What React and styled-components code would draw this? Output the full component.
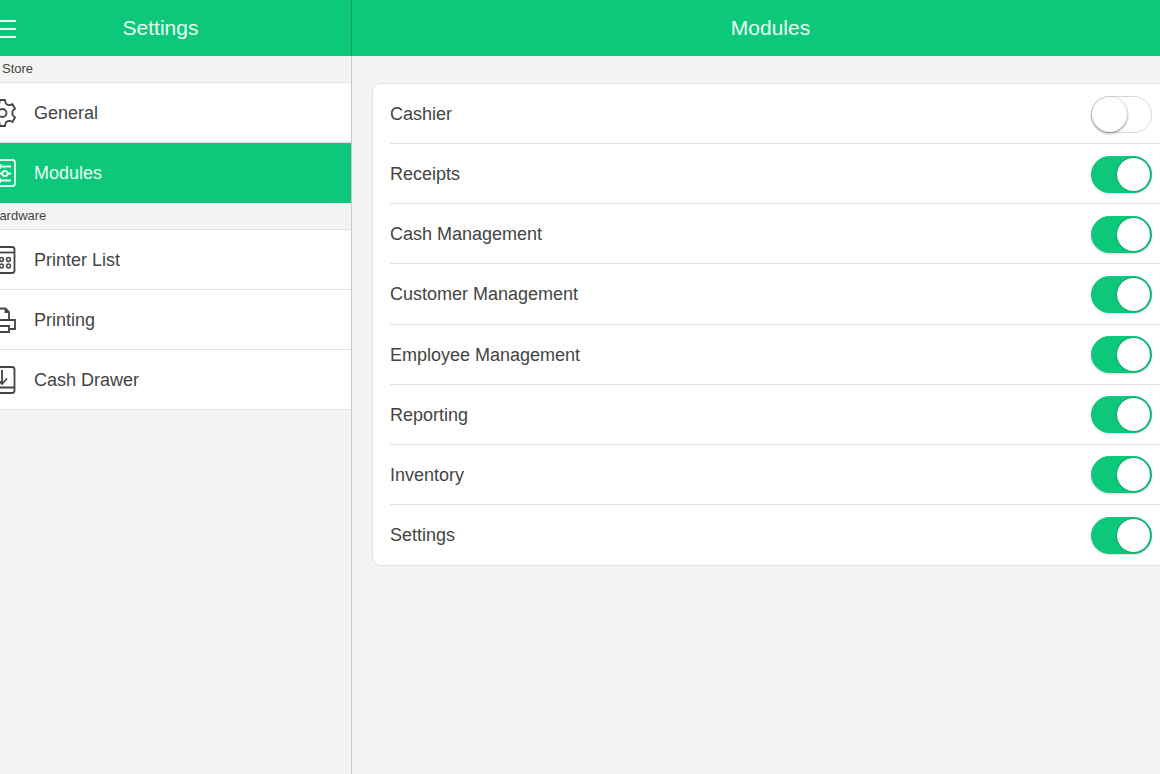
/* eslint-disable react/prop-types */
import { useState } from "react";
import styled, { createGlobalStyle } from "styled-components";

const GlobalStyle = createGlobalStyle`
  :root {
    --color-brand: #0dc77b;
    --color-brand-dark: #0a9f62;
    --color-page: #f4f4f4;
    --color-line: #e2e2e2;
    --color-text: #444;
  }

  * {
    box-sizing: border-box;
  }

  body {
    margin: 0;
    background-color: var(--color-page);
    color: var(--color-text);
    font-family: "Liberation Sans", Arial, sans-serif;
  }
`;

/* The shell bleeds past both window edges */
const Viewport = styled.div`
  overflow: hidden;
`;

const Shell = styled.div`
  display: flex;
  min-height: 100vh;
  margin: 0 -30px;
`;

const Sidebar = styled.aside`
  display: flex;
  flex-direction: column;
  flex: 0 0 382px;
`;

const Nav = styled.nav`
  flex: 1;
  border-right: 1px solid #c8c8c8;
`;

const Main = styled.main`
  flex: 1;
  min-width: 0;
`;

const Header = styled.header`
  display: grid;
  grid-template-columns: 46px 1fr 46px;
  align-items: center;
  height: 56px;
  border-right: 1px solid var(--color-brand-dark);
  background-color: var(--color-brand);
  color: #e9fff5;
`;

const Title = styled.h1`
  grid-column: 2;
  margin: 0;
  font-size: 21px;
  line-height: 24px;
  font-weight: 400;
  text-align: center;
`;

const MenuButton = styled.button`
  display: flex;
  justify-content: flex-end;
  padding: 2px 0 0;
  border: 0;
  background: none;
  color: inherit;
`;

const SectionLabel = styled.h2`
  height: 27px;
  margin: 0;
  padding-left: ${(props) => (props.$indent ? "32px" : "20px")};
  border-bottom: 1px solid var(--color-line);
  font-size: 13px;
  line-height: 26px;
  font-weight: 400;
`;

const NavItem = styled.a`
  display: flex;
  align-items: center;
  gap: 18px;
  height: 60px;
  padding: 1px 0 0 18px;
  border-bottom: 1px solid
    ${(props) => (props.$active ? "var(--color-brand)" : "var(--color-line)")};
  background-color: ${(props) => (props.$active ? "var(--color-brand)" : "#fff")};
  color: ${(props) => (props.$active ? "#e9fff5" : "inherit")};
  font-size: 18px;
  line-height: 20px;
  text-decoration: none;
`;

const StyledIcon = styled.svg`
  flex: none;
  width: 28px;
  height: 28px;
  fill: none;
  stroke: currentColor;
  stroke-width: 1.8;
`;

const Card = styled.div`
  display: grid;
  grid-auto-rows: 1fr;
  min-height: 483px;
  margin: 27px 20px;
  padding-left: 17px;
  border: 1px solid var(--color-line);
  border-radius: 9px;
  background-color: #fff;
`;

const ModuleRow = styled.label`
  display: flex;
  align-items: center;
  justify-content: space-between;
  min-height: 60px;
  padding: 1px 17px 0 0;
  border-bottom: 1px solid var(--color-line);
  font-size: 18px;
  line-height: 20px;

  &:last-child {
    border-bottom: 0;
  }
`;

const Toggle = styled.input`
  appearance: none;
  width: 61px;
  height: 37px;
  margin: 0;
  border: 1px solid #d8d8d8;
  border-radius: 19px;
  background-color: #fff;

  &::before {
    content: "";
    display: block;
    width: 35px;
    height: 35px;
    border-radius: 50%;
    background-color: #fff;
    box-shadow: 0 1px 3px rgba(0, 0, 0, 0.5);
  }

  &:checked {
    padding: 1px;
    border-color: var(--color-brand);
    background-color: var(--color-brand);
    box-shadow: 0 1px 2px rgba(0, 0, 0, 0.15);
  }

  &:checked::before {
    width: 33px;
    height: 33px;
    margin-left: auto;
    box-shadow: 0 0 2px rgba(0, 0, 0, 0.4);
  }
`;

function Icon({ children }) {
  return (
    <StyledIcon viewBox="0 0 28 28" aria-hidden="true">
      {children}
    </StyledIcon>
  );
}

const icons = {
  menu: (
    <Icon>
      <path strokeWidth="2" d="M1 6h27M1 14h27M1 22h27" />
    </Icon>
  ),
  gear: (
    <Icon>
      <path d="M12 1h5l.6 2.9q.2 1 1.2 1.4l1.2.6q1 .5 1.9.2l2.6-.9 2.6 4.5-2 1.7q-.8.7-.7 1.5v2.2q-.1.8.7 1.5l2 1.7-2.6 4.5-2.6-.9q-.9-.3-1.9.2l-1.2.6q-1 .4-1.2 1.4L17 27h-5l-.6-2.9q-.2-1-1.2-1.4l-1.2-.6q-1-.5-1.9-.2l-2.6.9-2.6-4.5 2-1.7q.8-.7.7-1.500v-2.200q.1-.8-.7-1.500l-2-1.700 2.600-4.500 2.600.9q.9.3 1.900-.2l1.200-.6q1-.4 1.200-1.400z" />
      <circle cx="14.5" cy="14" r="4" />
    </Icon>
  ),
  sliders: (
    <Icon>
      <rect x="1" y="1" width="26" height="26" rx="2.5" />
      <path d="M5 7.5h5M12 7.5h11M5 14.5h9M20 14.5h3M5 21.5h5M12 21.5h11M12 5v5M12 19v5" />
      <circle cx="17" cy="14.5" r="2.7" />
    </Icon>
  ),
  list: (
    <Icon>
      <rect x="1" y="1" width="25.5" height="26" rx="2.5" />
      <path d="M1 6.5h25.5" />
      <g strokeWidth="1.5">
        <circle cx="6" cy="13.5" r="1.9" />
        <circle cx="13.5" cy="13.5" r="1.9" />
        <circle cx="20.5" cy="13.5" r="1.9" />
        <circle cx="6" cy="20" r="1.9" />
        <circle cx="13.5" cy="20" r="1.9" />
        <circle cx="20.5" cy="20" r="1.9" />
      </g>
    </Icon>
  ),
  printer: (
    <Icon>
      <path d="M6 14V2.5h11.5L21 6v8M17.5 2.5V6H21M6 23H1v-9h26v9h-6M6 20h15v6H6z" />
    </Icon>
  ),
  drawer: (
    <Icon>
      <rect x="1" y="1" width="25.5" height="26" rx="2.5" />
      <path d="M1 21.5h25.5M14 4v14M9 12.5l5 5.5 5-5.5" />
    </Icon>
  ),
};

const sections = [
  {
    label: "Store",
    indent: true,
    items: [
      { name: "General", icon: "gear" },
      { name: "Modules", icon: "sliders", active: true },
    ],
  },
  {
    label: "Hardware",
    items: [
      { name: "Printer List", icon: "list" },
      { name: "Printing", icon: "printer" },
      { name: "Cash Drawer", icon: "drawer" },
    ],
  },
];

const modules = [
  "Cashier",
  "Receipts",
  "Cash Management",
  "Customer Management",
  "Employee Management",
  "Reporting",
  "Inventory",
  "Settings",
];

function ModuleToggle({ name }) {
  const [enabled, setEnabled] = useState(name !== "Cashier");

  return (
    <ModuleRow>
      {name}
      <Toggle
        type="checkbox"
        checked={enabled}
        onChange={(e) => setEnabled(e.target.checked)}
      />
    </ModuleRow>
  );
}

function App() {
  return (
    <>
      <GlobalStyle />
      <Viewport>
        <Shell>
          <Sidebar>
            <Header>
              <MenuButton type="button" aria-label="Menu">
                {icons.menu}
              </MenuButton>
              <Title>Settings</Title>
            </Header>
            <Nav>
              {sections.map((section) => (
                <section key={section.label}>
                  <SectionLabel $indent={section.indent}>
                    {section.label}
                  </SectionLabel>
                  {section.items.map((item) => (
                    <NavItem key={item.name} href="#" $active={item.active}>
                      {icons[item.icon]}
                      {item.name}
                    </NavItem>
                  ))}
                </section>
              ))}
            </Nav>
          </Sidebar>
          <Main>
            <Header>
              <Title>Modules</Title>
            </Header>
            <Card>
              {modules.map((name) => (
                <ModuleToggle key={name} name={name} />
              ))}
            </Card>
          </Main>
        </Shell>
      </Viewport>
    </>
  );
}

export default App;
